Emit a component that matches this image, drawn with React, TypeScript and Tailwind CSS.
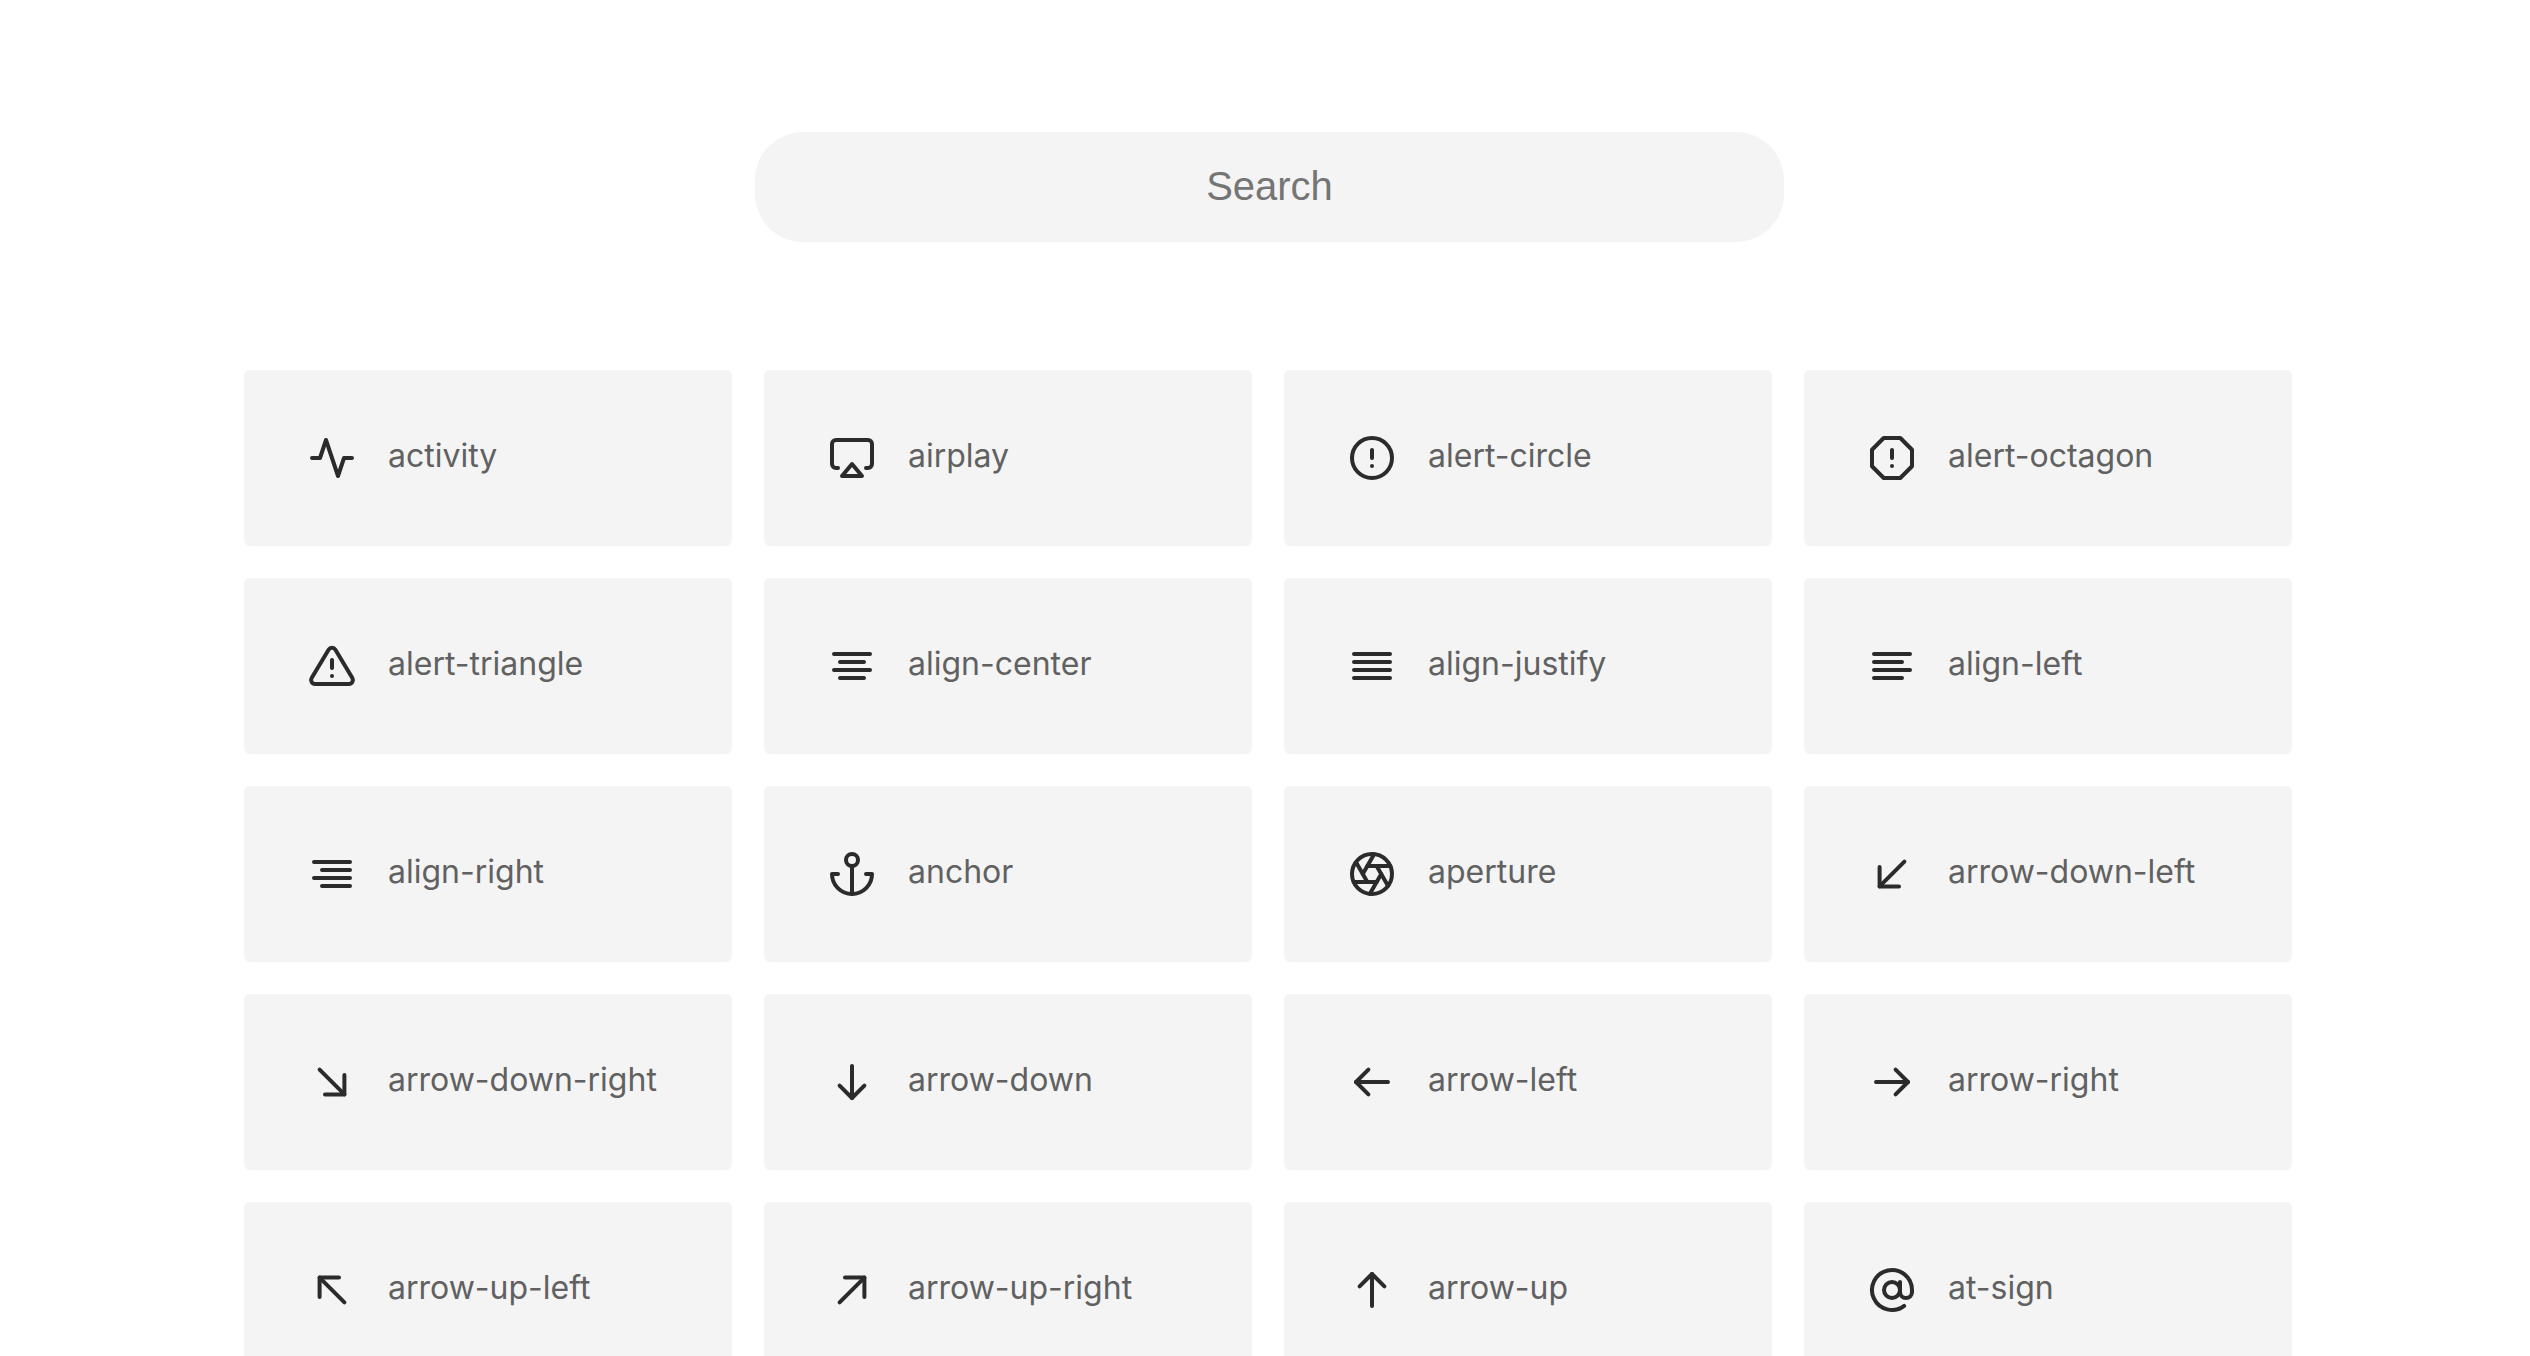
import React from "react";

const L = (x1: number, y1: number, x2: number, y2: number) => <line x1={x1} y1={y1} x2={x2} y2={y2} />;

const icons: [string, React.ReactNode][] = [
  ["activity", <polyline points="22 12 18 12 15 21 9 3 6 12 2 12" />],
  ["airplay", <><path d="M5 17H4a2 2 0 0 1-2-2V5a2 2 0 0 1 2-2h16a2 2 0 0 1 2 2v10a2 2 0 0 1-2 2h-1" /><polygon points="12 15 17 21 7 21 12 15" /></>],
  ["alert-circle", <><circle cx="12" cy="12" r="10" />{L(12, 8, 12, 12)}{L(12, 16, 12.01, 16)}</>],
  ["alert-octagon", <><polygon points="7.86 2 16.14 2 22 7.86 22 16.14 16.14 22 7.86 22 2 16.14 2 7.86 7.86 2" />{L(12, 8, 12, 12)}{L(12, 16, 12.01, 16)}</>],
  ["alert-triangle", <><path d="M10.29 3.86L1.82 18a2 2 0 0 0 1.71 3h16.94a2 2 0 0 0 1.71-3L13.71 3.86a2 2 0 0 0-3.42 0z" />{L(12, 9, 12, 13)}{L(12, 17, 12.01, 17)}</>],
  ["align-center", <>{L(18, 10, 6, 10)}{L(21, 6, 3, 6)}{L(21, 14, 3, 14)}{L(18, 18, 6, 18)}</>],
  ["align-justify", <>{L(21, 10, 3, 10)}{L(21, 6, 3, 6)}{L(21, 14, 3, 14)}{L(21, 18, 3, 18)}</>],
  ["align-left", <>{L(17, 10, 3, 10)}{L(21, 6, 3, 6)}{L(21, 14, 3, 14)}{L(17, 18, 3, 18)}</>],
  ["align-right", <>{L(21, 10, 7, 10)}{L(21, 6, 3, 6)}{L(21, 14, 3, 14)}{L(21, 18, 7, 18)}</>],
  ["anchor", <><circle cx="12" cy="5" r="3" />{L(12, 22, 12, 8)}<path d="M5 12H2a10 10 0 0 0 20 0h-3" /></>],
  ["aperture", <><circle cx="12" cy="12" r="10" />{L(14.31, 8, 20.05, 17.94)}{L(9.69, 8, 21.17, 8)}{L(7.38, 12, 13.12, 2.06)}{L(9.69, 16, 3.95, 6.06)}{L(14.31, 16, 2.83, 16)}{L(16.62, 12, 10.88, 21.94)}</>],
  ["arrow-down-left", <>{L(18.2, 5.8, 5.8, 18.2)}<polyline points="5.8 8.5 5.8 18.2 15.5 18.2" /></>],
  ["arrow-down-right", <>{L(5.8, 5.8, 18.2, 18.2)}<polyline points="18.2 8.5 18.2 18.2 8.5 18.2" /></>],
  ["arrow-down", <>{L(12, 4, 12, 20)}<polyline points="18.2 13.8 12 20 5.8 13.8" /></>],
  ["arrow-left", <>{L(20, 12, 4, 12)}<polyline points="10.2 18.2 4 12 10.2 5.8" /></>],
  ["arrow-right", <>{L(4, 12, 20, 12)}<polyline points="13.8 5.8 20 12 13.8 18.2" /></>],
  ["arrow-up-left", <>{L(18.2, 18.2, 5.8, 5.8)}<polyline points="5.8 15.5 5.8 5.8 15.5 5.8" /></>],
  ["arrow-up-right", <>{L(5.8, 18.2, 18.2, 5.8)}<polyline points="8.5 5.8 18.2 5.8 18.2 15.5" /></>],
  ["arrow-up", <>{L(12, 20, 12, 4)}<polyline points="5.8 10.2 12 4 18.2 10.2" /></>],
  ["at-sign", <><circle cx="12" cy="12" r="4" /><path d="M16 8v5a3 3 0 0 0 6 0v-1a10 10 0 1 0-3.92 7.94" /></>],
];

export default function App() {
  return (
    <div className="h-screen overflow-hidden bg-white">
      <div className="pl-[755px] pt-[132px]">
        <div className="flex h-[110px] w-[1029px] items-center justify-center rounded-[48px] bg-[#f4f4f4] pb-0.5 font-['Liberation_Sans',sans-serif] text-[40px] text-[#757575]">
          Search
        </div>
      </div>
      <div className="ml-[244px] mt-[128px] grid w-[2048px] grid-cols-4 gap-8">
        {icons.map(([name, icon]) => (
          <div key={name} className="flex h-[176px] items-center rounded-[6px] bg-[#f4f4f4] pl-16">
            <svg
              viewBox="0 0 24 24"
              className="h-12 w-12 shrink-0 text-[#2b2b2b]"
              fill="none"
              stroke="currentColor"
              strokeWidth="2"
              strokeLinecap="round"
              strokeLinejoin="round"
            >
              {icon}
            </svg>
            <span className="mb-1 ml-8 font-['Inter',sans-serif] text-[32px] text-[#616161]">{name}</span>
          </div>
        ))}
      </div>
    </div>
  );
}
